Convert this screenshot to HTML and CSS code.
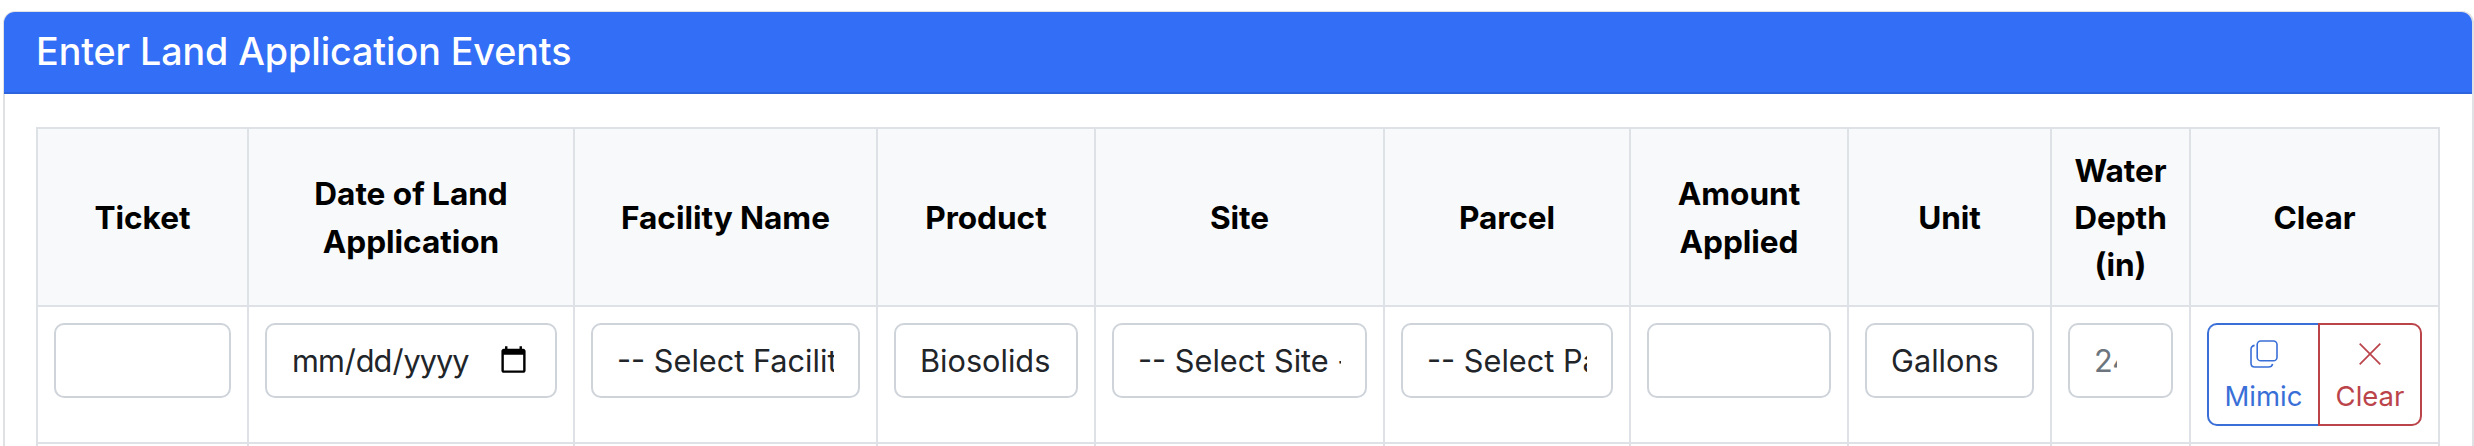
FILE: index.html
```html
<!DOCTYPE html>
<html lang="en">
<head>
<meta charset="utf-8">
<title>Enter Land Application Events</title>
<link rel="stylesheet" href="styles.css">
</head>
<body>
<section class="card">
  <header class="card-header">Enter Land Application Events</header>
  <div class="card-body">
    <table class="events">
      <colgroup>
        <col class="c-ticket"><col class="c-date"><col class="c-facility"><col class="c-product"><col class="c-site"><col class="c-parcel"><col class="c-amount"><col class="c-unit"><col class="c-depth"><col class="c-clear">
      </colgroup>
      <thead>
        <tr>
          <th>Ticket</th>
          <th>Date of Land Application</th>
          <th>Facility Name</th>
          <th>Product</th>
          <th>Site</th>
          <th>Parcel</th>
          <th>Amount Applied</th>
          <th>Unit</th>
          <th>Water Depth (in)</th>
          <th>Clear</th>
        </tr>
      </thead>
      <tbody>
        <tr>
          <td><input class="field" type="text"></td>
          <td><input class="field date" type="date"></td>
          <td><select class="field"><option>-- Select Facility --</option></select></td>
          <td><select class="field"><option>Biosolids</option></select></td>
          <td><select class="field"><option>-- Select Site --</option></select></td>
          <td><select class="field"><option>-- Select Parcel --</option></select></td>
          <td><input class="field" type="text"></td>
          <td><select class="field"><option>Gallons</option></select></td>
          <td><input class="field depth" type="text" placeholder="24"></td>
          <td>
            <div class="btn-group">
              <button class="btn mimic" type="button">
                <svg class="icon" viewBox="0 0 28 28" fill="none" stroke="currentColor" stroke-width="1.6"><rect x="7.2" y="1" width="19.8" height="19.8" rx="3.6"/><path d="M4.6 5.4C2.4 5.8 1 7.4 1 9.6v13.6c0 2.2 1.6 3.8 3.8 3.8h13.6c2.2 0 3.8-1.2 4.2-3.2"/></svg>
                <span>Mimic</span>
              </button>
              <button class="btn clear" type="button">
                <svg class="icon" viewBox="0 0 28 28" fill="none" stroke="currentColor" stroke-width="1.7"><path d="M3.7 3.7l20.6 20.6M24.3 3.7L3.7 24.3"/></svg>
                <span>Clear</span>
              </button>
            </div>
          </td>
        </tr>
        <tr class="next">
          <td></td><td></td><td></td><td></td><td></td><td></td><td></td><td></td><td></td><td></td>
        </tr>
      </tbody>
    </table>
  </div>
</section>
</body>
</html>
```

FILE: styles.css
```css
* { box-sizing: border-box; }
html, body { height: 100%; overflow: hidden; }
body {
  margin: 0;
  padding: 11px 0 0 3px;
  background: #fff;
  font-family: Inter, "Liberation Sans", sans-serif;
  color: #212529;
}
.card {
  width: 2471px;
  border: 2px solid #dfe1e5;
  border-bottom: 0;
  border-radius: 12px 12px 0 0;
}
.card-header {
  margin: -1px 0 0 -1px;
  width: calc(100% + 1px);
  height: 82px;
  padding: 0 32px;
  line-height: 78px;
  background: #326ef6;
  border-bottom: 2px solid #2d63dd;
  border-radius: 11px 11px 0 0;
  color: #fff;
  font-size: 37.7px;
  font-weight: 500;
  letter-spacing: -0.1px;
}
.card-body { padding: 33px 31px 0; }
.events {
  width: 2402px;
  table-layout: fixed;
  border-collapse: collapse;
}
.c-ticket { width: 211px; }
.c-date { width: 326px; }
.c-facility { width: 303px; }
.c-product { width: 218px; }
.c-site { width: 289px; }
.c-parcel { width: 246px; }
.c-amount { width: 218px; }
.c-unit { width: 203px; }
.c-depth { width: 139px; }
.c-clear { width: 249px; }
th, td { border: 2px solid #dee2e6; padding: 16px; }
th {
  background: #f8f9fa;
  color: #000;
  height: 178px;
  padding-top: 17px;
  text-align: center;
  vertical-align: middle;
  font-size: 31.6px;
  line-height: 47.3px;
  font-weight: 700;
  letter-spacing: -0.05px;
}
td { height: 137px; vertical-align: top; }
.next td { height: 60px; }
.field {
  display: block;
  width: 100%;
  height: 75px;
  padding: 0 24px;
  border: 2px solid #ced4da;
  border-radius: 10px;
  background: #fff;
  color: #212529;
  font-family: inherit;
  font-size: 30.7px;
  appearance: none;
  outline: 0;
}
.field::placeholder { color: #6c757d; opacity: 1; }
.date { letter-spacing: -1px; }
.depth { padding-right: 54px; }
.btn-group { display: flex; height: 103px; }
.btn {
  display: flex;
  flex-direction: column;
  align-items: center;
  padding: 10px 0 0;
  background: #fff;
  border: 2px solid;
  font-family: inherit;
  font-size: 27.5px;
  line-height: 42px;
}
.icon { display: block; width: 28px; height: 28px; margin: 5px 0 7px; }
.mimic {
  width: 111px;
  color: #3a6fd8;
  border-color: #3a6fd8;
  border-right: 0;
  border-radius: 10px 0 0 10px;
}
.clear {
  width: 104px;
  color: #bb444b;
  border-color: #bb444b;
  border-radius: 0 10px 10px 0;
}
```
